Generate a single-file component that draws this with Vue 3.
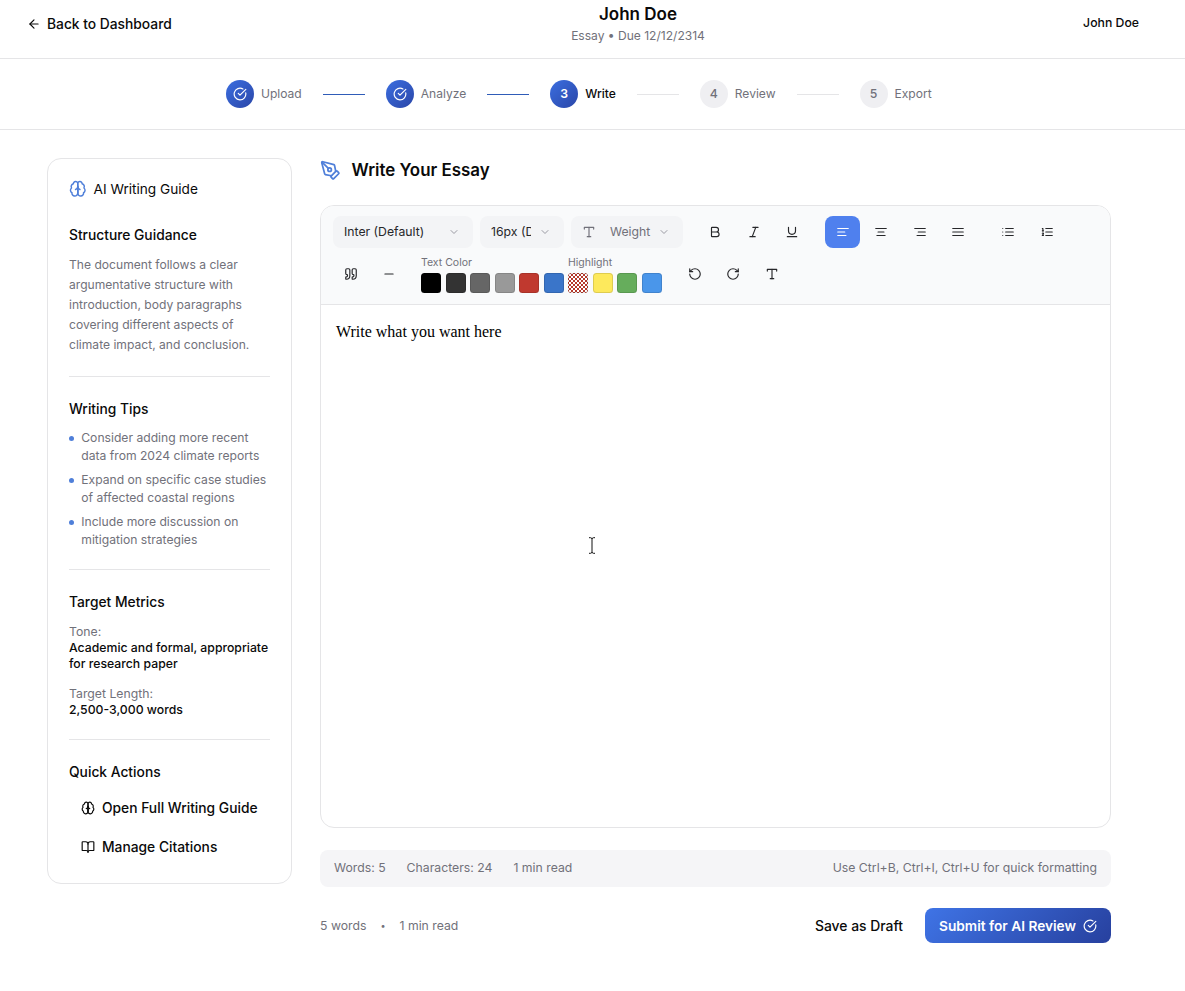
<template>
  <div class="page">
    <header class="topbar">
      <a class="back-link">
        <Icon name="arrowLeft" :size="14" />
        <span>Back to Dashboard</span>
      </a>
      <div class="doc-title">
        <h1>John Doe</h1>
        <p>Essay • Due 12/12/2314</p>
      </div>
      <div class="user-name">John Doe</div>
    </header>

    <nav class="stepper">
      <template v-for="(step, i) in steps" :key="step.label">
        <div class="step" :class="step.state">
          <div class="step-circle">
            <Icon v-if="step.state === 'done'" name="check" :size="14" />
            <span v-else>{{ i + 1 }}</span>
          </div>
          <span class="step-label">{{ step.label }}</span>
        </div>
        <div v-if="i < steps.length - 1" class="step-line" :class="{ on: step.state === 'done' }"></div>
      </template>
    </nav>

    <main class="content">
      <aside class="guide">
        <div class="guide-title">
          <Icon name="brain" :size="17.5" class="blue" />
          <span>AI Writing Guide</span>
        </div>

        <section class="guide-section first">
          <h3>Structure Guidance</h3>
          <p class="body-text">
            The document follows a clear argumentative structure with introduction, body paragraphs
            covering different aspects of climate impact, and conclusion.
          </p>
        </section>

        <section class="guide-section">
          <h3>Writing Tips</h3>
          <ul class="tips">
            <li v-for="tip in tips" :key="tip">{{ tip }}</li>
          </ul>
        </section>

        <section class="guide-section">
          <h3>Target Metrics</h3>
          <div class="metric">
            <div class="metric-label">Tone:</div>
            <div class="metric-value">Academic and formal, appropriate for research paper</div>
          </div>
          <div class="metric">
            <div class="metric-label">Target Length:</div>
            <div class="metric-value">2,500-3,000 words</div>
          </div>
        </section>

        <section class="guide-section">
          <h3>Quick Actions</h3>
          <div class="quick-actions">
            <button class="quick-btn">
              <Icon name="brain" :size="14" />
              <span>Open Full Writing Guide</span>
            </button>
            <button class="quick-btn">
              <Icon name="book" :size="14" />
              <span>Manage Citations</span>
            </button>
          </div>
        </section>
      </aside>

      <div class="writer">
        <div class="writer-head">
          <Icon name="pen" :size="21" class="blue" />
          <h2>Write Your Essay</h2>
        </div>

        <div class="editor">
          <div class="toolbar">
            <div class="tool-row">
              <div class="fake-select font-select">
                <span class="select-text">Inter (Default)</span>
                <Icon name="chevron" :size="12" class="chev" />
              </div>
              <div class="fake-select size-select">
                <span class="select-text">16px (Default)</span>
                <Icon name="chevron" :size="12" class="chev" />
              </div>
              <div class="fake-select weight-select">
                <Icon name="type" :size="14" class="type-icon" />
                <span class="select-text muted">Weight</span>
                <Icon name="chevron" :size="12" class="chev" />
              </div>
              <div class="tool-group style-group">
                <button v-for="n in ['bold', 'italic', 'underline']" :key="n" class="tool-btn">
                  <Icon :name="n" :size="14" />
                </button>
              </div>
              <div class="tool-group align-group">
                <button
                  v-for="n in ['alignLeft', 'alignCenter', 'alignRight', 'alignJustify']"
                  :key="n"
                  class="tool-btn"
                  :class="{ active: n === 'alignLeft' }"
                >
                  <Icon :name="n" :size="14" />
                </button>
              </div>
              <div class="tool-group">
                <button v-for="n in ['list', 'listOrdered']" :key="n" class="tool-btn">
                  <Icon :name="n" :size="14" />
                </button>
              </div>
            </div>

            <div class="tool-row second">
              <div class="tool-group first-group">
                <button v-for="n in ['quote', 'minus']" :key="n" class="tool-btn">
                  <Icon :name="n" :size="14" />
                </button>
              </div>
              <div class="tool-group color-group">
                <div class="color-set">
                  <span class="color-label">Text Color</span>
                  <div class="swatches">
                    <span v-for="c in textColors" :key="c" class="swatch" :style="{ background: c }"></span>
                  </div>
                </div>
                <div class="color-set">
                  <span class="color-label">Highlight</span>
                  <div class="swatches">
                    <span class="swatch checker"></span>
                    <span v-for="c in highlightColors" :key="c" class="swatch" :style="{ background: c }"></span>
                  </div>
                </div>
              </div>
              <div class="tool-group history-group">
                <button v-for="n in ['undo', 'redo', 'type']" :key="n" class="tool-btn">
                  <Icon :name="n" :size="14" />
                </button>
              </div>
            </div>
          </div>

          <div class="editor-body">
            <p>Write what you want here</p>
            <svg class="ibeam" width="8" height="17" viewBox="0 0 8 17" fill="none" stroke="#111" stroke-width="1">
              <path d="M1 .7h1.6c.7 0 1.4.5 1.4 1.3 0-.8.7-1.3 1.4-1.3H7M4 2v13M1 16.3h1.6c.7 0 1.4-.5 1.4-1.3 0 .8.7 1.3 1.4 1.3H7" />
            </svg>
          </div>
        </div>

        <div class="stats-bar">
          <div class="stats-left">
            <span>Words: 5</span>
            <span>Characters: 24</span>
            <span>1 min read</span>
          </div>
          <span>Use Ctrl+B, Ctrl+I, Ctrl+U for quick formatting</span>
        </div>

        <div class="writer-foot">
          <div class="foot-meta">
            <span>5 words</span>
            <span class="dot">•</span>
            <span>1 min read</span>
          </div>
          <div class="foot-actions">
            <button class="draft-btn">Save as Draft</button>
            <button class="submit-btn">
              <span>Submit for AI Review</span>
              <Icon name="check" :size="14" />
            </button>
          </div>
        </div>
      </div>
    </main>
  </div>
</template>

<script setup>
import { h } from 'vue'

const iconPaths = {
  arrowLeft: ['m12 19-7-7 7-7', 'M19 12H5'],
  check: ['M21.801 10A10 10 0 1 1 17 3.335', 'm9 11 3 3L22 4'],
  pen: [
    'M15.707 21.293a1 1 0 0 1-1.414 0l-1.586-1.586a1 1 0 0 1 0-1.414l5.586-5.586a1 1 0 0 1 1.414 0l1.586 1.586a1 1 0 0 1 0 1.414z',
    'm18 13-1.375-6.874a1 1 0 0 0-.746-.776L3.235 2.028a1 1 0 0 0-1.207 1.207L5.35 15.879a1 1 0 0 0 .776.746L13 18',
    'm2.3 2.3 7.286 7.286',
    'M13 11a2 2 0 1 1-4 0 2 2 0 0 1 4 0z',
  ],
  brain: [
    'M12 5a3 3 0 1 0-5.997.125 4 4 0 0 0-2.526 5.77 4 4 0 0 0 .556 6.588A4 4 0 1 0 12 18Z',
    'M12 5a3 3 0 1 1 5.997.125 4 4 0 0 1 2.526 5.77 4 4 0 0 1-.556 6.588A4 4 0 1 1 12 18Z',
    'M15 13a4.5 4.5 0 0 1-3-4 4.5 4.5 0 0 1-3 4',
    'M12 18V9',
  ],
  book: [
    'M12 7v14',
    'M3 18a1 1 0 0 1-1-1V4a1 1 0 0 1 1-1h5a4 4 0 0 1 4 4 4 4 0 0 1 4-4h5a1 1 0 0 1 1 1v13a1 1 0 0 1-1 1h-6a3 3 0 0 0-3 3 3 3 0 0 0-3-3z',
  ],
  chevron: ['m6 9 6 6 6-6'],
  type: ['M4 7V4h16v3', 'M9 20h6', 'M12 4v16'],
  bold: ['M6 12h9a4 4 0 0 1 0 8H7a1 1 0 0 1-1-1V5a1 1 0 0 1 1-1h7a4 4 0 0 1 0 8'],
  italic: ['M19 4h-9', 'M14 20H5', 'M15 4 9 20'],
  underline: ['M6 4v6a6 6 0 0 0 12 0V4', 'M4 20h16'],
  alignLeft: ['M21 6H3', 'M15 12H3', 'M17 18H3'],
  alignCenter: ['M21 6H3', 'M17 12H7', 'M19 18H5'],
  alignRight: ['M21 6H3', 'M21 12H9', 'M21 18H7'],
  alignJustify: ['M3 6h18', 'M3 12h18', 'M3 18h18'],
  list: ['M3 6h.01', 'M3 12h.01', 'M3 18h.01', 'M8 6h13', 'M8 12h13', 'M8 18h13'],
  listOrdered: ['M10 12h11', 'M10 18h11', 'M10 6h11', 'M4 10h2', 'M4 6h1v4', 'M6 18H4c0-1 2-2 2-3s-1-1.5-2-1'],
  quote: [
    'M16 3a2 2 0 0 0-2 2v6a2 2 0 0 0 2 2 1 1 0 0 1 1 1v1a2 2 0 0 1-2 2 1 1 0 0 0-1 1v2a1 1 0 0 0 1 1 6 6 0 0 0 6-6V5a2 2 0 0 0-2-2z',
    'M5 3a2 2 0 0 0-2 2v6a2 2 0 0 0 2 2 1 1 0 0 1 1 1v1a2 2 0 0 1-2 2 1 1 0 0 0-1 1v2a1 1 0 0 0 1 1 6 6 0 0 0 6-6V5a2 2 0 0 0-2-2z',
  ],
  minus: ['M5 12h14'],
  undo: ['M3 12a9 9 0 1 0 9-9 9.75 9.75 0 0 0-6.74 2.74L3 8', 'M3 3v5h5'],
  redo: ['M21 12a9 9 0 1 1-9-9c2.52 0 4.93 1 6.74 2.74L21 8', 'M21 3v5h-5'],
}

// small functional component so every icon shares the same svg wrapper
const Icon = (props) =>
  h(
    'svg',
    {
      width: props.size,
      height: props.size,
      viewBox: '0 0 24 24',
      fill: 'none',
      stroke: 'currentColor',
      'stroke-width': 2,
      'stroke-linecap': 'round',
      'stroke-linejoin': 'round',
      style: { flexShrink: 0, display: 'block' },
    },
    iconPaths[props.name].map((d) => h('path', { d })),
  )
Icon.props = ['name', 'size']

const steps = [
  { label: 'Upload', state: 'done' },
  { label: 'Analyze', state: 'done' },
  { label: 'Write', state: 'current' },
  { label: 'Review', state: 'todo' },
  { label: 'Export', state: 'todo' },
]

const tips = [
  'Consider adding more recent data from 2024 climate reports',
  'Expand on specific case studies of affected coastal regions',
  'Include more discussion on mitigation strategies',
]

const textColors = ['#000000', '#333333', '#666666', '#999999', '#c0392f', '#3a75c9']
const highlightColors = ['#fde95c', '#66ad5c', '#4a96ea']
</script>

<style scoped>
.page {
  font-family: Inter, "Liberation Sans", sans-serif;
  color: #0a0a0a;
  background: #fff;
  min-height: 991px;
}

button {
  font-family: inherit;
  border: none;
  background: none;
  padding: 0;
  color: inherit;
}

.blue {
  color: #4f7fd9;
}

/* top bar */
.topbar {
  height: 58px;
  border-bottom: 1px solid #e5e5e7;
  display: grid;
  grid-template-columns: 544px 134px 1fr;
  padding-left: 27px;
}

.back-link {
  display: flex;
  align-items: center;
  gap: 6px;
  font-size: 13.8px;
  font-weight: 500;
  height: 47px;
}

.doc-title {
  text-align: center;
  white-space: nowrap;
  padding-top: 4px;
}

.doc-title h1 {
  margin: 0;
  font-size: 17px;
  line-height: 21px;
  font-weight: 600;
}

.doc-title p {
  margin: 0;
  font-size: 12.05px;
  line-height: 21px;
  color: #71717a;
}

.user-name {
  justify-self: end;
  margin-right: 46px;
  font-size: 12.25px;
  font-weight: 500;
  line-height: 46px;
}

/* stepper */
.stepper {
  height: 70px;
  border-bottom: 1px solid #e5e5e7;
  display: flex;
  align-items: center;
  padding-left: 226px;
  gap: 21px;
}

.step {
  display: flex;
  align-items: center;
  gap: 7px;
  font-size: 12.05px;
  color: #71717a;
}

.step-label {
  margin-bottom: 2px;
}

.step-circle {
  width: 28px;
  height: 28px;
  border-radius: 50%;
  display: flex;
  align-items: center;
  justify-content: center;
  font-weight: 600;
  font-size: 12.25px;
  color: #fff;
  background: linear-gradient(135deg, #3b6ee0, #2a46a8);
}

.step-circle span {
  margin-bottom: 1px;
}

.step.todo .step-circle {
  background: #efeff2;
  color: #71717a;
  font-weight: 500;
}

.step.current .step-label {
  color: #0a0a0a;
  font-weight: 500;
}

.step-line {
  width: 42px;
  height: 1px;
  background: #e5e5e7;
}

.step-line.on {
  background: #2f5cb8;
}

/* layout */
.content {
  display: flex;
  align-items: flex-start;
  gap: 28px;
  padding: 28px 74px 48px 47px;
}

/* left guide */
.guide {
  width: 245px;
  flex-shrink: 0;
  box-sizing: border-box;
  height: 726px;
  border: 1px solid #e5e5e7;
  border-radius: 14px;
  padding: 21px;
}

.guide-title {
  display: flex;
  align-items: center;
  gap: 7px;
  font-size: 13.65px;
  line-height: 18px;
  font-weight: 400;
  margin-bottom: 27px;
}

.guide-section {
  border-top: 1px solid #e5e5e7;
  padding-top: 22px;
  margin-top: 20px;
}

.guide-section.first {
  border-top: none;
  padding-top: 0;
  margin-top: 0;
}

.guide-section h3 {
  margin: 0 0 9px;
  font-size: 13.8px;
  line-height: 21px;
  font-weight: 500;
}

.body-text {
  margin: 0;
  padding-bottom: 1px;
  font-size: 12.1px;
  line-height: 20px;
  color: #71717a;
}

.tips {
  list-style: none;
  margin: 0;
  padding: 0;
  display: flex;
  flex-direction: column;
  gap: 6px;
}

.tips li {
  position: relative;
  padding-left: 12.25px;
  font-size: 12.15px;
  line-height: 18px;
  color: #71717a;
}

.tips li::before {
  content: "";
  position: absolute;
  left: 0;
  top: 7px;
  width: 5px;
  height: 5px;
  border-radius: 50%;
  background: #4f7fd9;
}

.metric {
  margin-bottom: 14px;
  font-size: 12.25px;
  line-height: 16px;
}

.metric:first-of-type {
  margin-top: 11px;
}

.metric:last-child {
  margin-bottom: 0;
  padding-bottom: 1px;
}

.metric-label {
  color: #71717a;
}

.metric-value {
  font-weight: 500;
}

.quick-actions {
  display: flex;
  flex-direction: column;
  margin-top: -4px;
}

.quick-btn {
  display: flex;
  align-items: center;
  gap: 7px;
  height: 39px;
  padding-left: 12px;
  font-size: 13.8px;
  font-weight: 500;
}

/* right column */
.writer {
  width: 791px;
  flex-shrink: 0;
}

.writer-head {
  display: flex;
  align-items: center;
  gap: 10.5px;
  height: 24px;
  margin-bottom: 23px;
}

.writer-head h2 {
  margin: 0;
  font-size: 16.9px;
  line-height: 22px;
  font-weight: 600;
}

.editor {
  height: 623px;
  box-sizing: border-box;
  border: 1px solid #e5e5e7;
  border-radius: 14px;
  overflow: hidden;
  display: flex;
  flex-direction: column;
}

.toolbar {
  background: #f9fafb;
  border-bottom: 1px solid #e5e5e7;
  padding: 10px 12px;
  height: 99px;
  box-sizing: border-box;
}

.tool-row {
  display: flex;
  align-items: center;
  gap: 7px;
  height: 32px;
}

.tool-row.second {
  margin-top: 8px;
  height: 37px;
  align-items: flex-start;
}

.fake-select {
  display: flex;
  align-items: center;
  height: 32px;
  box-sizing: border-box;
  border-radius: 8px;
  background: #f3f4f6;
  font-size: 12.25px;
  padding: 0 11px;
  color: #27272a;
}

.select-text {
  margin-bottom: 2px;
}

.font-select {
  width: 140px;
  justify-content: space-between;
}

.size-select {
  width: 84px;
  justify-content: space-between;
}

.size-select .select-text {
  width: 40px;
  overflow: hidden;
  white-space: nowrap;
}

.weight-select {
  width: 112px;
}

.type-icon {
  color: #71717a;
  margin-right: 14px;
}

.muted {
  color: #71717a;
}

.weight-select .chev {
  margin-left: auto;
}

.chev {
  color: #9a9aa3;
  margin-right: 2px;
}

.tool-group {
  display: flex;
  align-items: center;
  gap: 3.5px;
  margin-left: 8px;
}

.style-group {
  margin-left: 7.5px;
}

.align-group {
  margin-left: 8.5px;
}

.first-group {
  margin-left: 0;
  margin-top: 2px;
}

.history-group {
  margin-top: 2px;
  margin-left: 8.5px;
}

.tool-btn {
  width: 35px;
  height: 32px;
  border-radius: 8px;
  display: flex;
  align-items: center;
  justify-content: center;
  color: #27272a;
}

.tool-btn.active {
  background: #4f80ee;
  color: #fff;
}

.color-group {
  gap: 4.5px;
  margin-left: 7.5px;
  align-items: flex-start;
}

.color-set {
  display: flex;
  flex-direction: column;
}

.color-label {
  font-size: 10.5px;
  line-height: 13px;
  color: #71717a;
  margin-bottom: 3.5px;
}

.swatches {
  display: flex;
  gap: 4.5px;
}

.swatch {
  width: 20px;
  height: 20px;
  box-sizing: border-box;
  border-radius: 3.5px;
  border: 1px solid rgba(0, 0, 0, 0.12);
}

.checker {
  background: repeating-conic-gradient(#b5392c 0 25%, #fff 0 50%) 0 0 / 4px 4px;
}

.editor-body {
  flex: 1;
  position: relative;
  padding: 17px 15px;
}

.editor-body p {
  margin: 0;
  font-family: "Liberation Serif", serif;
  font-size: 16px;
  line-height: 20px;
  color: #000;
}

.ibeam {
  position: absolute;
  left: 267px;
  top: 232px;
}

.stats-bar {
  margin-top: 22px;
  height: 37px;
  box-sizing: border-box;
  padding: 0 14px 2px;
  border-radius: 8px;
  background: #f5f5f7;
  display: flex;
  align-items: center;
  justify-content: space-between;
  font-size: 12.25px;
  color: #71717a;
}

.stats-left {
  display: flex;
  gap: 21px;
}

.writer-foot {
  margin-top: 21px;
  height: 35px;
  display: flex;
  align-items: center;
  justify-content: space-between;
}

.foot-meta {
  display: flex;
  gap: 14px;
  font-size: 12.25px;
  color: #71717a;
}

.foot-meta .dot {
  font-size: 9px;
  line-height: 15px;
}

.foot-actions {
  display: flex;
  align-items: center;
  gap: 22px;
}

.draft-btn {
  font-size: 13.9px;
  font-weight: 500;
}

.submit-btn {
  width: 186px;
  height: 35px;
  border-radius: 8px;
  display: flex;
  align-items: center;
  justify-content: center;
  gap: 7px;
  font-size: 13.7px;
  font-weight: 600;
  color: #fff;
  background: linear-gradient(135deg, #3f74e6, #27409e);
}
</style>

<style>
html,
body {
  margin: 0;
  background: #fff;
}
</style>
